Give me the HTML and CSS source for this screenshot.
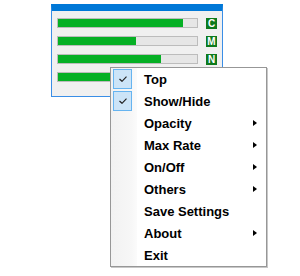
FILE: index.html
```html
<!DOCTYPE html>
<html lang="en">
<head>
  <meta charset="UTF-8">
  <title>Meter</title>
  <link rel="stylesheet" href="styles.css">
</head>
<body>

<div class="meter-wrap">
  <div class="meter-row">
    <div class="track"><div class="fill" style="width: 90%"></div></div>
    <span class="tag">C</span>
  </div>
  <div class="meter-row">
    <div class="track"><div class="fill" style="width: 56%"></div></div>
    <span class="tag">M</span>
  </div>
  <div class="meter-row">
    <div class="track"><div class="fill" style="width: 74%"></div></div>
    <span class="tag">N</span>
  </div>
  <div class="meter-row">
    <div class="track"><div class="fill" style="width: 62%"></div></div>
    <span class="tag">D</span>
  </div>
</div>

<ul class="ctx-menu">
  <li class="item checked">
    <span class="gutter"><span class="check"><svg width="8" height="6" viewBox="0 0 8 6"><polyline points="0.5,3 3,5.3 7.5,0.7" fill="none" stroke="#222" stroke-width="1.2"/></svg></span></span>
    <span class="label">Top</span>
  </li>
  <li class="item checked">
    <span class="gutter"><span class="check"><svg width="8" height="6" viewBox="0 0 8 6"><polyline points="0.5,3 3,5.3 7.5,0.7" fill="none" stroke="#222" stroke-width="1.2"/></svg></span></span>
    <span class="label">Show/Hide</span>
  </li>
  <li class="item sub"><span class="gutter"></span><span class="label">Opacity</span></li>
  <li class="item sub"><span class="gutter"></span><span class="label">Max Rate</span></li>
  <li class="item sub"><span class="gutter"></span><span class="label">On/Off</span></li>
  <li class="item sub"><span class="gutter"></span><span class="label">Others</span></li>
  <li class="item"><span class="gutter"></span><span class="label">Save Settings</span></li>
  <li class="item sub"><span class="gutter"></span><span class="label">About</span></li>
  <li class="item"><span class="gutter"></span><span class="label">Exit</span></li>
</ul>

</body>
</html>
```

FILE: styles.css
```css
body {
  margin: 0;
  background: #fff;
  font-family: "Liberation Sans", Arial, sans-serif;
}

.meter-wrap {
  margin: 4px 0 0 51px;
  width: 170px;
  height: 78px;
  border: 1px solid #3a8ee6;
  border-top: 7px solid #0078d7;
  background: #f0f0f0;
  padding-top: 7px;
  display: flex;
  flex-direction: column;
  gap: 8px;
  box-sizing: content-box;
}

.meter-row {
  display: flex;
  align-items: center;
  height: 10px;
  padding-left: 5px;
}

.track {
  width: 139px;
  height: 8px;
  border: 1px solid #bcbcbc;
  background: #e6e6e6;
}

.fill {
  height: 100%;
  background: #06b025;
}

.tag {
  margin-left: 8px;
  width: 11px;
  height: 11px;
  background: #0d7a1c;
  color: #fff;
  font-size: 10px;
  font-weight: bold;
  line-height: 11px;
  text-align: center;
}

.ctx-menu {
  position: absolute;
  left: 110px;
  top: 67px;
  width: 155px;
  margin: 0;
  padding: 0;
  list-style: none;
  background: #fff;
  border: 1px solid #979797;
  box-shadow: 1px 1px 0 #c8c8c8;
}

.item {
  position: relative;
  display: flex;
  align-items: center;
  height: 22px;
}

.gutter {
  width: 24px;
  height: 100%;
  display: flex;
  align-items: center;
  padding-left: 2px;
  background: linear-gradient(to right, #f2f2f2, #f7f7f7 80%, #fbfbfb);
}

.check {
  width: 17px;
  height: 18px;
  border: 1px solid #66b4f0;
  background: #cce4f7;
  display: flex;
  align-items: center;
  justify-content: center;
}

.label {
  margin-left: 7px;
  font-size: 13px;
  font-weight: bold;
  color: #000;
}

.sub::after {
  content: "";
  position: absolute;
  right: 9px;
  top: 8px;
  border-left: 4px solid #000;
  border-top: 3.5px solid transparent;
  border-bottom: 3.5px solid transparent;
}
```
